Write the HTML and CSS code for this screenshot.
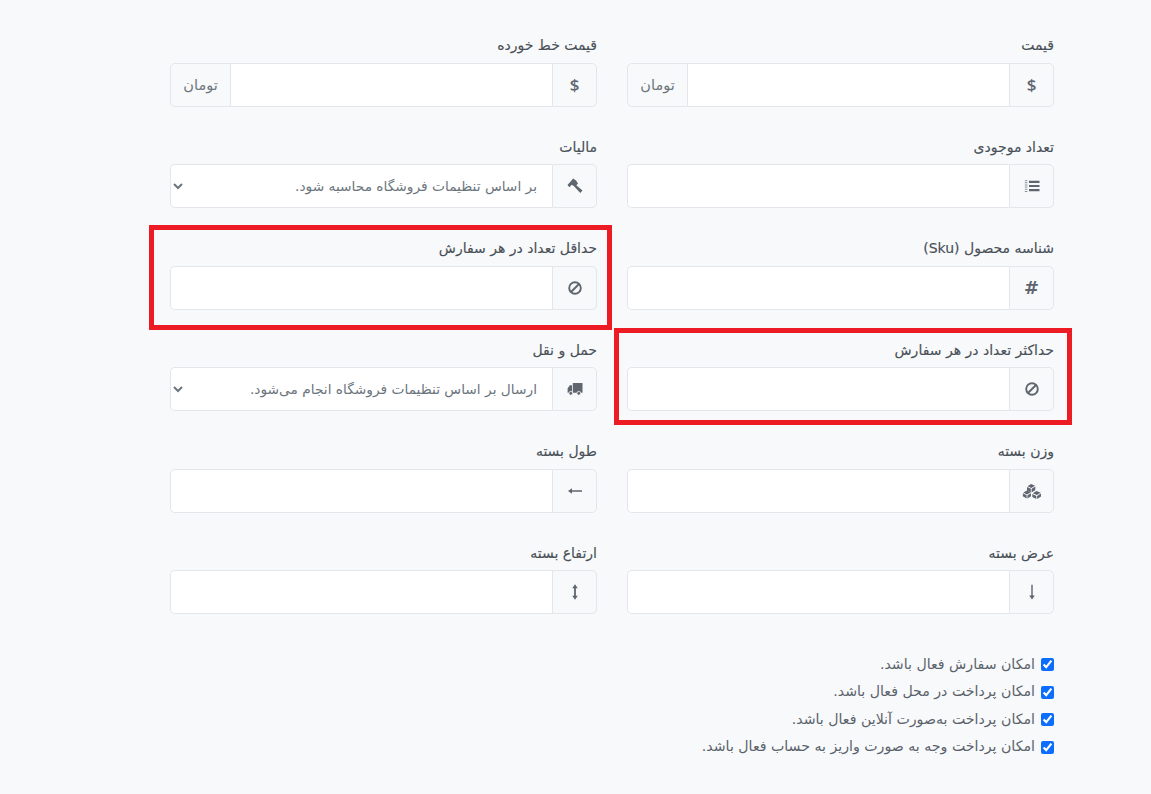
FILE: index.html
```html
<!DOCTYPE html>
<html lang="fa" dir="rtl">
<head>
<meta charset="utf-8">
<title>فرم محصول</title>
<link rel="stylesheet" href="styles.css">
</head>
<body>
<main class="page">
  <section class="grid">
    <div class="field"><label class="label">قیمت</label><div class="group"><span class="addon"><span class="glyph">$</span></span><input class="input" type="text"><span class="addon addon-text">تومان</span></div></div>
    <div class="field"><label class="label">قیمت خط خورده</label><div class="group"><span class="addon"><span class="glyph">$</span></span><input class="input" type="text"><span class="addon addon-text">تومان</span></div></div>

    <div class="field"><label class="label">تعداد موجودی</label><div class="group"><span class="addon"><svg class="icon" viewBox="0 0 16 16"><path d="M5 2.800h10.500v2.200H5zM5 6.900h10.500v2.200H5zM5 11h10.500v2.200H5z"/><path d="M.8 2.200h2.600v1H.8zM.8 4.300h2.600v1H.8zM.8 6.500h2.600v1H.8zM.8 8.600h2.600v1H.8zM.8 10.800h2.600v1H.8zM.8 12.900h2.600v1H.8z" opacity=".7"/></svg></span><input class="input" type="text"></div></div>
    <div class="field"><label class="label">مالیات</label><div class="group"><span class="addon"><svg class="icon" viewBox="0 0 16 16"><path d="M.5 7 6.200.6l2.800 1.800 2 3.200-3 3.200-3.300-2-2.300 2.400z"/><path d="M8.700 6.800 15.500 12.600 13.300 14.900 7.300 8.400z"/></svg></span><select class="input select"><option>بر اساس تنظیمات فروشگاه محاسبه شود.</option></select></div></div>

    <div class="field"><label class="label">شناسه محصول (Sku)</label><div class="group"><span class="addon"><span class="glyph glyph-hash">#</span></span><input class="input" type="text"></div></div>
    <div class="field"><label class="label">حداقل تعداد در هر سفارش</label><div class="group"><span class="addon"><svg class="icon" viewBox="0 0 16 16"><circle class="line" cx="8" cy="8" r="5.800"/><path class="line" d="M4 12 12 4"/></svg></span><input class="input" type="text"></div></div>

    <div class="field"><label class="label">حداکثر تعداد در هر سفارش</label><div class="group"><span class="addon"><svg class="icon" viewBox="0 0 16 16"><circle class="line" cx="8" cy="8" r="5.800"/><path class="line" d="M4 12 12 4"/></svg></span><input class="input" type="text"></div></div>
    <div class="field"><label class="label">حمل و نقل</label><div class="group"><span class="addon"><svg class="icon" viewBox="0 0 16 16"><path d="M5.800 2h9.700v9.800H5.800zM.6 7.500 2.800 4.200h2.200v7.600H.6z"/><circle class="wheel" cx="3.800" cy="12.300" r="1.900"/><circle class="wheel" cx="11.800" cy="12.300" r="1.900"/></svg></span><select class="input select"><option>ارسال بر اساس تنظیمات فروشگاه انجام می‌شود.</option></select></div></div>

    <div class="field"><label class="label">وزن بسته</label><div class="group"><span class="addon"><svg class="icon icon-wide" viewBox="0 0 20 16"><path d="M5.500 3.200 9.200 1l3.800 1.800-3.700 2.300zM5.100 3.900l3.800 1.900-.2 3.600-3.800-1.900zM13.400 3.500 9.700 5.800l-.2 3.600 3.700-2.200z"/><path d="M1.300 9.600 5 7.600l3.600 1.900-3.600 2.100zM.9 10.300l3.700 2 .1 3.100-3.900-2.100zM9 10.300l-3.500 2-.1 3.100 3.600-2.100zM10.800 10.200l3.700-2.300 4.200 1.900-3.800 2.300zM10.300 10.900l4 2v3l-4-2zM19 10.500l-3.900 2.400V16l3.900-2.400z"/></svg></span><input class="input" type="text"></div></div>
    <div class="field"><label class="label">طول بسته</label><div class="group"><span class="addon"><svg class="icon" viewBox="0 0 16 16"><path d="M1 8 5 5.200v2.100h10v1.400H5v2.100z"/></svg></span><input class="input" type="text"></div></div>

    <div class="field"><label class="label">عرض بسته</label><div class="group"><span class="addon"><svg class="icon" viewBox="0 0 16 16"><path d="M8 15.500 5.200 11.500h2.100V.8h1.400v10.700h2.100z"/></svg></span><input class="input" type="text"></div></div>
    <div class="field"><label class="label">ارتفاع بسته</label><div class="group"><span class="addon"><svg class="icon" viewBox="0 0 16 16"><path d="M8 .3 10.800 4.300H8.900v7.400h1.900L8 15.700 5.200 11.700h1.900V4.300H5.200z"/></svg></span><input class="input" type="text"></div></div>
  </section>

  <section class="checks">
    <label class="check"><input type="checkbox" checked><span class="check-text">امکان سفارش فعال باشد.</span></label>
    <label class="check"><input type="checkbox" checked><span class="check-text">امکان پرداخت در محل فعال باشد.</span></label>
    <label class="check"><input type="checkbox" checked><span class="check-text">امکان پرداخت به‌صورت آنلاین فعال باشد.</span></label>
    <label class="check"><input type="checkbox" checked><span class="check-text">امکان پرداخت وجه به صورت واریز به حساب فعال باشد.</span></label>
  </section>

  <div class="mark mark-min"></div>
  <div class="mark mark-max"></div>
</main>
</body>
</html>
```
FILE: styles.css
```css
* { box-sizing: border-box; }
html, body { margin: 0; height: 100%; overflow: hidden; }
body {
  background: #f8f9fb;
  color: #495057;
  font-family: "DejaVu Sans", "Noto Sans", sans-serif;
  font-size: 14px;
}
.page {
  position: relative;
  height: 794px;
  padding: 34.4px 97px 0 170px;
}
.grid {
  display: grid;
  grid-template-columns: 427px 427px;
  column-gap: 30px;
  row-gap: 29px;
}
.label {
  display: block;
  height: 21px;
  line-height: 22px;
  margin-bottom: 7.5px;
  font-size: 14px;
  -webkit-text-stroke: 0.15px #495057;
  color: #495057;
}
.group {
  display: flex;
  height: 44px;
}
.addon {
  flex: none;
  display: flex;
  align-items: center;
  justify-content: center;
  width: 45px;
  background: #f8f9fa;
  border: 1px solid #e3e6ea;
  border-radius: 0 5px 5px 0;
  color: #5f6670;
}
.addon-text {
  width: 61px;
  border-radius: 5px 0 0 5px;
  font-size: 14.500px;
  font-weight: 400;
  color: #6c757d;
}
.input {
  flex: 1;
  min-width: 0;
  height: 44px;
  background: #fff;
  border: 1px solid #e3e6ea;
  border-right: 0;
  border-radius: 5px 0 0 5px;
  outline: 0;
  font: inherit;
}
.group .input:not(:last-child) { border-left: 0; border-radius: 0; }
.select {
  padding: 0 11px 0 0;
  color: #6c757d;
  font-size: 13.750px;
}
.glyph {
  font-family: "Open Sans", sans-serif;
  font-size: 17px;
  font-weight: 600;
  line-height: 1;
  color: #5f6670;
}
.glyph-hash {
  font-family: "DejaVu Sans", sans-serif;
  font-size: 18px;
  font-weight: 700;
}
.icon {
  width: 16px;
  height: 16px;
  fill: #5f6670;
}
.icon-wide { width: 20px; }
.line {
  fill: none;
  stroke: #5f6670;
  stroke-width: 1.900;
}
.wheel {
  stroke: #f8f9fa;
  stroke-width: 0.800;
}
.checks {
  display: flex;
  flex-direction: column;
  margin-top: 36.400px;
}
.check {
  display: flex;
  align-items: center;
  gap: 6px;
  height: 27.500px;
  color: #5a626b;
  font-size: 14.150px;
}
.check-text { line-height: 20px; margin-top: -2px; }
.check input {
  width: 13px;
  height: 13px;
  margin: 0;
  accent-color: #0d6efd;
}
.mark {
  position: absolute;
  border: 5px solid #ed1c24;
}
.mark-min { left: 149px; top: 225px; width: 463px; height: 105px; }
.mark-max { left: 614px; top: 328px; width: 458px; height: 97px; }
```
